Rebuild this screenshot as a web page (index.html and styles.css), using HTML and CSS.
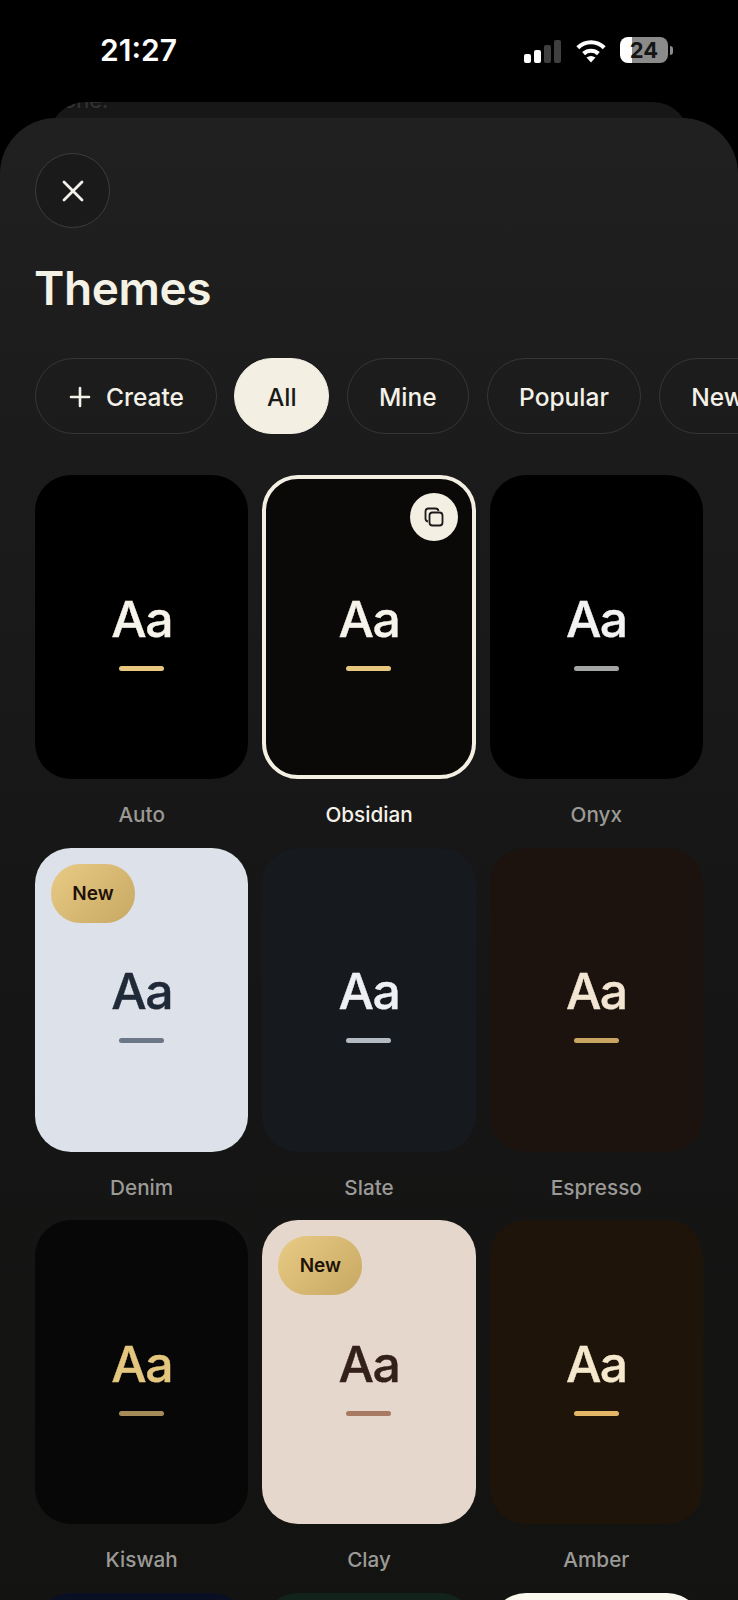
FILE: index.html
```html
<!DOCTYPE html>
<html>
<head>
  <title>Themes</title>
  <link rel="stylesheet" href="styles.css">
</head>
<body>
  <div class="status">
    <span class="time">21:27</span>
    <div class="status-icons">
      <div class="signal">
        <i class="bar bar1"></i><i class="bar bar2"></i><i class="bar bar3"></i><i class="bar bar4"></i>
      </div>
      <svg class="wifi" width="36" height="25" viewBox="0 0 34 24" fill="none" stroke="#fff" stroke-width="4">
        <path d="M4.3 9.3a18 18 0 0 1 25.4 0"/>
        <path d="M9.9 15a10.500 10.500 0 0 1 14.200 0"/>
        <path d="M17 23.500l-4.300-4.800q4.300-3 8.600 0z" fill="#fff" stroke="none"/>
      </svg>
      <div class="battery">
        <div class="battery-body"><span class="battery-num">24</span></div>
        <i class="battery-cap"></i>
      </div>
    </div>
  </div>

  <div class="back-sheet"><span class="back-text">one.</span></div>

  <div class="sheet">
    <button class="close">
      <svg width="24" height="24" viewBox="0 0 24 24" fill="none" stroke="#f4f1e8" stroke-width="2.800" stroke-linecap="round">
        <path d="M3 3l18 18M21 3L3 21"/>
      </svg>
    </button>
    <h1 class="title">Themes</h1>

    <div class="filters">
      <div class="pill pill-create">
        <svg width="22" height="22" viewBox="0 0 22 22" fill="none" stroke="#f4f1e8" stroke-width="2.600" stroke-linecap="round">
          <path d="M11 2v18M2 11h18"/>
        </svg>
        Create
      </div>
      <div class="pill pill-active">All</div>
      <div class="pill">Mine</div>
      <div class="pill">Popular</div>
      <div class="pill">New</div>
    </div>

    <div class="grid">
      <div class="theme">
        <div class="card t-auto"><span class="aa">Aa</span><i class="line"></i></div>
        <div class="name">Auto</div>
      </div>
      <div class="theme">
        <div class="card t-obsidian">
          <div class="copy">
            <svg width="20" height="20" viewBox="0 0 20 20" fill="none" stroke="#1a1a1a" stroke-width="1.800">
              <path d="M4 14.500q-2.500-.3-2.500-3V4.500q0-3 3-3h7q2.700 0 3 2.500"/>
              <rect x="5.500" y="5.500" width="13" height="13" rx="3"/>
            </svg>
          </div>
          <span class="aa">Aa</span><i class="line"></i>
        </div>
        <div class="name name-active">Obsidian</div>
      </div>
      <div class="theme">
        <div class="card t-onyx"><span class="aa">Aa</span><i class="line"></i></div>
        <div class="name">Onyx</div>
      </div>

      <div class="theme">
        <div class="card t-denim"><span class="tag">New</span><span class="aa">Aa</span><i class="line"></i></div>
        <div class="name">Denim</div>
      </div>
      <div class="theme">
        <div class="card t-slate"><span class="aa">Aa</span><i class="line"></i></div>
        <div class="name">Slate</div>
      </div>
      <div class="theme">
        <div class="card t-espresso"><span class="aa">Aa</span><i class="line"></i></div>
        <div class="name">Espresso</div>
      </div>

      <div class="theme">
        <div class="card t-kiswah"><span class="aa">Aa</span><i class="line"></i></div>
        <div class="name">Kiswah</div>
      </div>
      <div class="theme">
        <div class="card t-clay"><span class="tag">New</span><span class="aa">Aa</span><i class="line"></i></div>
        <div class="name">Clay</div>
      </div>
      <div class="theme">
        <div class="card t-amber"><span class="aa">Aa</span><i class="line"></i></div>
        <div class="name">Amber</div>
      </div>

      <div class="theme"><div class="card t-navy"></div></div>
      <div class="theme"><div class="card t-forest"></div></div>
      <div class="theme"><div class="card t-paper"></div></div>
    </div>
  </div>
</body>
</html>
```

FILE: styles.css
```css
* {
  box-sizing: border-box;
}
html, body {
  margin: 0;
  height: 1600px;
  overflow: hidden;
}
body {
  background-color: #000;
  font-family: Inter, "Liberation Sans", sans-serif;
  color: #f4f1e8;
}

/* status bar */
.status {
  height: 102px;
  display: flex;
  justify-content: space-between;
  padding: 33px 65px 0 100px;
}
.time {
  font-size: 30px;
  font-weight: 600;
  line-height: 35px;
  color: #fff;
}
.status-icons {
  display: flex;
  align-items: flex-end;
  height: 30px;
  gap: 11.500px;
}
.signal {
  display: flex;
  align-items: flex-end;
  gap: 3px;
  height: 23px;
}
.bar {
  display: block;
  width: 7px;
  border-radius: 2px;
  background-color: #fff;
}
.bar1 { height: 9px; }
.bar2 { height: 13px; }
.bar3 { height: 18px; background-color: #3f3f3f; }
.bar4 { height: 23px; background-color: #3f3f3f; }
.battery {
  display: flex;
  align-items: center;
  gap: 2px;
}
.battery-body {
  width: 48px;
  height: 26px;
  border-radius: 8px;
  background: linear-gradient(90deg, #fff 12px, #8b8b8b 12px);
  text-align: center;
}
.battery-num {
  font-size: 22px;
  font-weight: 700;
  line-height: 26px;
  color: #151515;
}
.battery-cap {
  display: block;
  width: 3px;
  height: 9px;
  border-radius: 0 3px 3px 0;
  background-color: #8b8b8b;
}

/* sheets */
.back-sheet {
  height: 60px;
  margin: 0 49px -44px;
  border-radius: 36px 36px 0 0;
  background-color: #171717;
  overflow: hidden;
}
.back-text {
  display: block;
  margin: -15px 0 0 14px;
  font-size: 22px;
  line-height: 26px;
  color: #343434;
}
.sheet {
  position: relative;
  height: 1482px;
  padding-top: 35px;
  border-radius: 56px 56px 0 0;
  background: linear-gradient(180deg, #202020 0, #1b1b1b 350px, #161616 800px, #131312 100%);
  overflow: hidden;
}
.close {
  display: flex;
  align-items: center;
  justify-content: center;
  width: 75px;
  height: 75px;
  margin: 0 0 0 35px;
  padding: 0;
  border: 1px solid #3d3d3d;
  border-radius: 50%;
  background-color: #1a1a1a;
}
.title {
  margin: 32px 0 0 34px;
  font-size: 46px;
  font-weight: 600;
  line-height: 56px;
  letter-spacing: -0.4px;
  color: #f4f1e5;
}

/* filter pills */
.filters {
  display: flex;
  gap: 17.400px;
  margin-top: 42px;
  padding-left: 35px;
}
.pill {
  flex: none;
  display: flex;
  align-items: center;
  gap: 15px;
  height: 76px;
  padding: 1px 31.500px 0;
  border: 1px solid #363634;
  border-radius: 38px;
  font-size: 24.500px;
  font-weight: 500;
  color: #f4f1e8;
}
.pill-create {
  padding: 1px 32px 0 33px;
}
.pill-active {
  border-color: #f3efe3;
  background-color: #f3efe3;
  color: #1a1a1a;
}

/* theme cards */
.grid {
  display: grid;
  grid-template-columns: repeat(3, 1fr);
  column-gap: 14px;
  row-gap: 20.600px;
  margin-top: 41px;
  padding: 0 35px;
}
.card {
  position: relative;
  display: flex;
  flex-direction: column;
  align-items: center;
  justify-content: center;
  height: 304px;
  padding-top: 7px;
  border-radius: 36px;
}
.aa {
  font-size: 50px;
  font-weight: 500;
  line-height: 56px;
  letter-spacing: -1.500px;
  -webkit-text-stroke: 0.4px currentColor;
}
.line {
  display: block;
  width: 45px;
  height: 5px;
  margin-top: 19px;
  border-radius: 3px;
}
.name {
  padding-top: 24px;
  font-size: 20.700px;
  font-weight: 500;
  line-height: 24px;
  text-align: center;
  color: #9b9a96;
}
.name-active {
  color: #f4f1e8;
}
.tag {
  position: absolute;
  top: 16px;
  left: 16px;
  width: 84px;
  height: 59px;
  border-radius: 29px;
  background: linear-gradient(135deg, #e8cb85, #c8a862);
  font-size: 19px;
  font-weight: 600;
  line-height: 59px;
  text-align: center;
  color: #1e1208;
}
.copy {
  position: absolute;
  top: 18px;
  right: 18px;
  display: flex;
  align-items: center;
  justify-content: center;
  width: 48px;
  height: 48px;
  border-radius: 50%;
  background-color: #f3efe3;
}

.t-auto { background-color: #000; color: #f6f3ea; }
.t-auto .line { background-color: #e6c77d; }
.t-obsidian { background-color: #0a0908; border: 4px solid #f3efe3; color: #f6f3ea; }
.t-obsidian .line { background-color: #e6c77d; }
.t-obsidian .copy { top: 14px; right: 14px; }
.t-onyx { background-color: #000; color: #f2f2f2; }
.t-onyx .line { background-color: #a3a5a5; }
.t-denim { background-color: #dde2ea; color: #1f2937; }
.t-denim .line { background-color: #6b7686; }
.t-slate { background-color: #16191e; color: #eef0f3; }
.t-slate .line { background-color: #b4bac2; }
.t-espresso { background-color: #1c130f; color: #f2e6d2; }
.t-espresso .line { background-color: #c9a564; }
.t-kiswah { background-color: #070707; color: #e4c67e; }
.t-kiswah .line { background-color: #a58c58; }
.t-clay { background-color: #e6d7cd; color: #33201a; }
.t-clay .line { background-color: #a87a64; }
.t-amber { background-color: #1f140a; color: #f5e8cd; }
.t-amber .line { background-color: #e3b765; }
.t-navy { background-color: #0a1024; }
.t-forest { background-color: #12231c; }
.t-paper { background-color: #fbf8f0; }
```
